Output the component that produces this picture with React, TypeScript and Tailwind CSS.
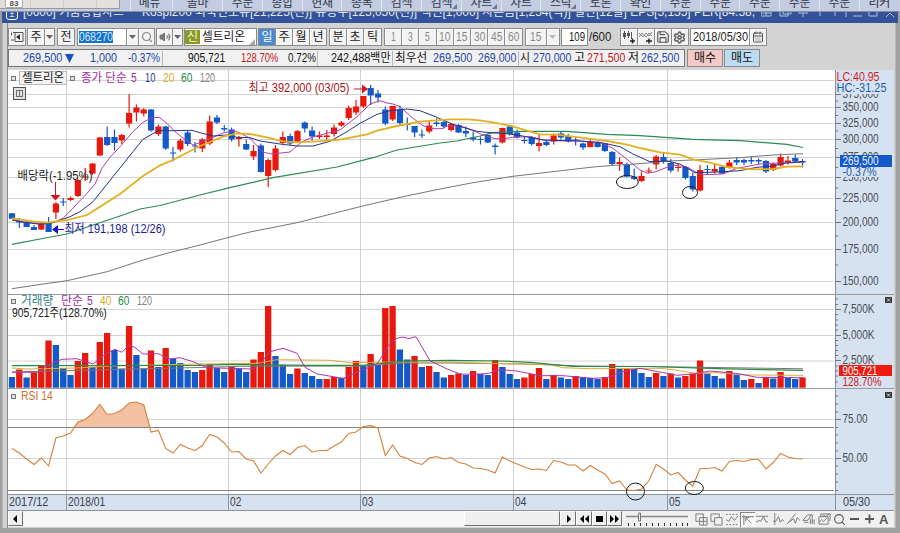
import React, { useLayoutEffect, useRef } from "react";
import { Search, Settings, Save, CalendarDays, Volume2 } from "lucide-react";

const FONT = "font-['Liberation_Sans','Noto_Sans_CJK_KR',sans-serif]";
const RED = "#e8190c";
const BLUE = "#1459c8";

/* Text condensed or widened horizontally so that it fills the width of its box. */
function Fit({ children, className = "" }: { children: string; className?: string }) {
  const box = useRef<HTMLSpanElement>(null);
  const inner = useRef<HTMLSpanElement>(null);
  useLayoutEffect(() => {
    if (box.current && inner.current && inner.current.offsetWidth > 0) {
      inner.current.style.transform = `scaleX(${box.current.clientWidth / inner.current.offsetWidth})`;
    }
  }, []);
  return (
    <span ref={box} className={"block shrink-0 whitespace-pre " + className}>
      <span ref={inner} className="inline-block origin-left">{children}</span>
    </span>
  );
}

const px = (i: number) => 12 + i * 7.32;

/* [up, body top, body bottom, high, low] */
const candles: number[][] = [
  [0,213.3,218.7,213,219],[0,221,222.5,218,228],[0,222,227,221,227],[0,227,230,225,230],[1,223.5,229.5,223,230],
  [0,222.5,232,217,232],[1,203.5,212.5,202,219],[0,201.5,202.5,198,206],[1,198,200,196.5,201],[1,180,196,179,197],
  [1,176.5,177.5,168,181],[1,163.5,173.5,163,175],[1,137.5,155.5,137,156],[0,137,145,126.5,146],[0,137,143,129.5,150.5],
  [1,135,140.5,134,144],[1,113,123.5,94,127.5],[1,107.5,112.5,104.5,121.5],[1,109.5,113.5,108,116.5],[0,109.5,130.5,109,131.5],
  [1,126.5,134,124.5,136],[0,126.5,148.5,126,150],[0,152.5,153.5,147,161.5],[1,140.5,149.5,138.5,151.5],[0,132.5,144,131,146],
  [0,145.5,146.5,142,152.5],[1,139.5,148.5,138,152],[1,121.5,143.5,115.5,145],[0,117.5,122.5,115,124],[0,128,129.5,125,131.5],
  [0,129.5,139.5,127.5,141.5],[1,137.5,139,136,146.5],[0,144,149.5,139.5,150],[1,151,156.5,145,160],[0,145.5,172,143.5,172.5],
  [1,160,176,158.5,187],[1,148.5,170,145,171.5],[1,137,143,131.5,144.5],[0,136,143.5,133.5,145],[1,131,141.5,130,142.5],
  [0,122.5,128.5,121.5,132.5],[0,130.5,136.5,126.5,140.5],[1,135.5,137,131.5,139],[1,135.5,137,130,140.5],[1,127.5,134,124.5,136.5],
  [1,122.5,125.5,121,126.5],[1,108,118,105.5,120],[1,106.5,112.5,100,115],[1,96,106.5,96,108],[0,88,95.5,85,105],
  [0,93.5,97.5,90,102.5],[0,109.5,123.5,106.5,125],[1,106,119.5,106,121],[0,109.5,123,105.5,125],[0,124,125,117.5,130.5],
  [0,126,132.5,126,137],[0,134.5,135.5,129.5,138],[1,125.5,131.5,121,133.5],[0,122.5,124,118.5,126.5],[0,122,126.5,120,128.5],
  [1,124,130,123,131.5],[0,125,132.5,124,133],[0,131,133.5,126.5,137],[0,137.5,139.5,131.5,141.5],[0,139,140,136.5,144.5],
  [0,135,142.5,134,143],[0,145.5,147,143.5,154.5],[1,128,142.5,127.5,143.5],[0,126.5,134,125,135.5],[0,132.5,137.5,129.5,138.5],
  [0,140,141,137,143.5],[0,137,144,136,145.5],[1,143,146,135,151.5],[0,142,145,140,146],[1,135.5,141.5,133.5,144.5],
  [0,133.5,137.5,131.5,139.5],[0,136,141.5,134,142.5],[0,139.5,140.5,137.5,145.5],[0,143.5,147.5,142.5,150],[1,142,147,138,147.5],
  [0,143,147,141.5,147.5],[0,143.5,151,143,152],[0,152,164,151,165],[1,162,164,157.5,171],[0,164.5,176.5,162.5,177.5],
  [0,176.5,179,168.5,180],[1,176,181,171.5,182],[1,170.5,171.5,167.5,173.5],[1,156.5,164.5,155,169.5],[0,157,161,152,163.5],
  [0,163,170.5,159,172.5],[1,167,168,164,171.5],[0,167,178,166,179.5],[0,176,189.5,172.5,191.5],[1,170,190.5,165,191.5],
  [0,169,170,165,174],[1,169,171.5,163.5,173.5],[0,167,173.5,166,174],[1,162.5,168,160,168.5],[0,160,162.5,157.5,165],
  [0,160,162.5,158.5,165],[0,160,161.5,157,164],[0,160,161.5,158.5,164],[0,161,171.5,160,173],[1,164,170,162.5,171],
  [1,157,165.5,153.5,166.5],[1,160.5,162.5,156,164.5],[0,158,161.5,154.5,162.5],[0,161,162.5,159,167.5],
];

/* Top of each volume bar, and whether it is an up bar. */
const volTop = [377,369.5,377.5,372.5,366,340.5,345,368,375,361,353,367,342,333,350,368.5,326,355,368.5,350.5,367,348,358.5,363,370,372,370,364.5,368,372,367,368.5,372,359.5,352,306,356,365,374,368.5,373,376,379,379,377,378,367,361,365,354,365,308,306,349.5,359.5,356,367,366,372,377.5,375,373.5,375,371,373.5,375,360,367,374,379,377.5,374,368,379,375,377.5,379,376,377,378,379,377,364,368,368,368.5,373,377,373,376,373.5,377.5,376,373.5,360.5,373.5,376,378.5,371,374.5,380,379,383,377,378.5,372,378,379,377.5];
const volUp =
  "0101110001" + "1011001001" + "0100001100" + "1001110001" + "0001101101" + "0110010100" +
  "1101001000" + "1110100100" + "0110100010" + "1011100010" + "010101001";

const rsi = [448.5,453,459,464.5,458,466,438,436,433,422,419.5,413.5,404.5,414.5,413.5,410,403,402,405,432,430.5,448.5,453,444.5,448,450.5,445.5,434.5,437,443,452,451.5,459,461,473,464,456,450.5,454.5,447.5,445.5,452,450.5,450.5,446,442,433.5,432,426.5,425.5,428,455.5,445,456,458.5,462.5,464.5,458,456.5,459,457.5,462.5,464,468,468.5,470,473,457,461,464,467,469.5,469,470.5,460.5,462,465,465,471,465.5,470,474,483.5,481,490,490.5,489,481,464.5,469,475,472.5,480,486,468.5,468.5,467.5,471,461.5,460.5,461.5,459.5,459.5,469,462.5,453.5,457,458.5,459];
const rsiPoints = rsi.map((y, i) => `${px(i).toFixed(1)},${y}`).join(" ");

const ma5 = "12,218.7 20,221.7 33,223 43,224 55,221.7 63,218.3 75,206 87,193.3 95,184 102,168.3 110,157.3 120,146.7 133,131.7 143,122.3 151,118 159,117.3 167,123.3 175,131.7 182,137.3 193,145 203,141.7 213,137.3 223,133 234,130.7 240,133 250,138.3 263,152.3 272,154 290,152 302,141.7 313,137 320,135 340,130 357,116.7 370,104 380,100.7 387,103 393,104 400,106.7 413,118.3 423,125.7 433,128.7 442,128.7 447,126 460,126 470,129.3 483,135 495,138.7 503,139 512,137.3 530,136.7 547,140.7 580,141 600,142.3 613,148.3 627,159.3 640,170 647,173 655,172 660,170 673,165 687,167 697,172.7 703,174.7 723,174 737,168.3 760,164 773,163.3 803,162.3";
const ma10 = "12,220 23,222 40,224.3 53,222.7 70,216.7 80,211.7 93,201.7 113,176.7 133,151.7 143,139.3 158,130.7 173,130.7 192,130.3 200,132.7 213,136 227,135 237,137.3 250,137.7 260,141 280,144 297,146 313,146 330,141.3 347,131.7 360,123.3 377,114.3 390,110.7 407,109 420,110.7 433,115.7 453,124.3 463,127.3 477,131.3 490,132.7 503,133.3 517,135 530,137.3 543,140 580,141 603,143 620,146.7 633,154 650,161.7 667,161 680,164 695,172.7 717,172 740,170.7 757,167.3 773,166 783,163.3 803,161.5";
const ma20 = "12,218.3 33,221.3 47,222.7 67,220 87,215 100,206.7 120,194 143,176 160,165.3 173,160 200,146 223,136.7 237,133.3 250,134 267,137.3 283,141.3 297,142.3 317,141.3 340,139.7 367,134.3 377,130.7 397,126 420,121.7 450,119.3 467,119.3 480,120.3 493,122.3 510,125.7 527,130.7 540,134.3 557,134.7 587,138.3 607,141 627,144.7 640,148 660,152.3 680,154.7 693,159.3 710,162.7 727,167 740,168.3 753,169.3 773,169 787,166.7 803,166.3";
const ma60 = "12,244.3 40,239 67,234 93,225 120,216 140,209 160,205.5 200,195 230,187.7 273,177.7 337,167 373,157.7 397,150 440,143 457,141 480,136 493,132.7 520,131.3 567,131.3 607,134.3 640,135.7 693,139.3 740,140.7 787,144.3 803,147.5";
const ma120 = "12,288.7 43,284 67,280.7 107,271.7 143,260 167,253.3 200,245 230,237 250,232 297,222.7 360,206.7 403,196.7 440,189 473,182.7 513,176.3 550,172 593,167 610,165.7 640,163.7 669,161 703,159.5 740,157.7 773,155 803,153.7";
const vma5 = "12,372.3 37,372.3 50,364 62,359.3 77,358.7 93,364 107,353 115,349.3 122,352.3 129,345 135,347.5 143,354 158,353.7 170,359 180,357.7 193,361.7 207,367.7 253,369 260,364 270,351.7 283,348.3 297,353.3 305,367.3 317,374 343,378.3 360,371 377,364 390,343.3 397,338.3 402,337 409,338.5 416,336.7 430,360.7 447,369 460,374 480,374.5 490,373 500,369.7 517,371 540,375.7 563,375.7 593,378.3 607,377.7 620,372.3 640,368.3 660,372 677,375.3 693,374 710,371 737,373.5 757,377.3 803,377.7";
const vma40 = "12,368 27,369 77,368 110,366 197,364 257,363.3 277,359.7 330,360.3 350,362.7 397,362 450,362.3 520,364 550,364.7 563,367.7 590,368.7 660,368.3 675,370 693,373 717,372.7 750,375 803,375.3";
const vma60 = "12,365.7 200,365.3 230,364.3 310,365.3 363,365.3 403,361 450,360.3 500,361 530,362.3 573,366.3 650,366.5 717,368.7 803,370.3";
const vma120 = "12,372 67,370.7 133,369 200,367.5 240,366.3 363,366 403,363 450,363 523,364 583,366 660,366.7 803,368.8";

const months = [66.5, 228.5, 360.5, 513.5, 667.5];

function Plot({ y, h, grid, children }: { y: number; h: number; grid: number[]; children: React.ReactNode }) {
  return (
    <svg width="827" height={h} viewBox={`8 ${y} 827 ${h}`} className="block shrink-0 overflow-visible">
      {grid.map((g) => <line key={g} x1="8" x2="834" y1={g} y2={g} stroke="#d4d4d4" />)}
      {months.map((m) => <line key={m} x1={m} x2={m} y1={y} y2={y + h} stroke="#d0d0d0" />)}
      {children}
    </svg>
  );
}

function Axis({ y, h, labels, minor, children }: { y: number; h: number; labels: [number, string, number][]; minor: number[]; children?: React.ReactNode }) {
  return (
    <svg width="59" height={h} viewBox={`835 ${y} 59 ${h}`} className="block shrink-0 overflow-hidden bg-[#d7e2f0]" fontSize="12">
      <line x1="835.5" x2="835.5" y1={y} y2={y + h} stroke="#8a8f98" />
      {minor.map((m) => <line key={m} x1="835" x2="838" y1={m} y2={m} stroke="#777" />)}
      {labels.map(([ly, t, w]) => (
        <g key={t}>
          <line x1="835" x2="841" y1={ly} y2={ly} stroke="#777" />
          <text x="842.5" y={ly + 3.5} fill="#484c54" textLength={w} lengthAdjust="spacingAndGlyphs">{t}</text>
        </g>
      ))}
      {children}
    </svg>
  );
}

function CloseMark({ y }: { y: number }) {
  return (
    <g>
      <rect x="885" y={y} width="7" height="6" fill="#3a3a3a" />
      <path d={`M887 ${y + 1.5}l3 3m0 -3l-3 3`} stroke="#fff" strokeWidth=".8" />
    </g>
  );
}

const Dot = ({ className = "" }: { className?: string }) => (
  <i className={"block size-[5px] shrink-0 border border-[#777] bg-[#ddd] " + className} />
);

const Down = ({ light = false }: { light?: boolean }) => (
  <svg width="7" height="4" viewBox="0 0 7 4"><path d="M0 0h7L3.5 4z" fill={light ? "#bbb" : "#666"} /></svg>
);

function Btn({ className = "", children }: { className?: string; children?: React.ReactNode }) {
  return (
    <div className={"flex h-[18px] shrink-0 items-center justify-center border border-[#8c8c8c] bg-[#f3f3f3] shadow-[inset_1px_1px_0_#fff] " + className}>
      {children}
    </div>
  );
}

const tabs: [string, boolean][] = [["메뉴", false], ["올마", false], ["주문", false], ["종합", false], ["현재", false], ["종목", false], ["검색", false], ["검색", true], ["차트", true], ["차트", false], ["스탁", true], ["토론", false], ["확인", false], ["주문", false], ["주문", false], ["주문", false], ["주문", false], ["주문", false], ["리커", false]];

function TopStrip() {
  return (
    <div className="flex h-[12px] overflow-hidden border-b border-[#8b8f98] bg-[#c3cce0]">
      <div className="flex h-[9px] w-[120px] shrink-0 border-r border-b border-[#999] bg-[#e2e0df] pl-[5px]">
        <div className="h-[8px] w-[18px] rounded-b-[2px] border border-t-0 border-[#aaa] bg-white text-center text-[8px] leading-[7px] font-bold text-[#555]">83</div>
        <div className="ml-[7px] h-full w-[34px] border-x border-[#ccc]" />
        <div className="h-full w-[33px] border-r border-[#ccc]" />
      </div>
      <div className="ml-[10px] flex">
        {tabs.map(([t, c], i) => (
          <div key={i} className={"relative h-[11px] shrink-0 border-l border-[#dfe6f2] " + (i === 0 ? "w-[42px]" : i === 1 ? "w-[50px]" : "w-[39.8px]")}>
            <div className={"-mt-[5px] text-center text-[12px] leading-[16px] tracking-[-0.3px] text-[#303848] " + (i === 0 ? "pr-[4px]" : "")}>{t}</div>
            {c && <svg className="absolute right-[4px] bottom-[2px]" width="5" height="5"><path d="M5 0v5H0z" fill="#6e7786" /></svg>}
          </div>
        ))}
      </div>
    </div>
  );
}

function TitleBar() {
  return (
    <div className="mx-[2px] flex h-[11px] items-start overflow-hidden bg-[#33529a] pl-[4px] text-[12px] leading-[16px] text-[#e4eaf6]">
      <div className="-mt-[4px] flex h-[12px] w-[12px] items-center justify-center rounded-[3px] border border-white text-[9px] leading-none">±</div>
      <Fit className="-mt-[8px] ml-[5px] w-[101px]">[0600] 키움종합차트</Fit>
      <Fit className="-mt-[8px] ml-[18px] w-[613px]">Kospi200 외국인보유[21,225(천)] 유동주[125,050(천)] 액면[1,000] 자본금[1,254(억)] 결산[12월] EPS[5,155] PER[84.58,</Fit>
      <svg className="ml-[6px] shrink-0" width="134" height="6" fill="none" stroke="#aebfe2">
        <path d="M0 0v4h10V0M5 0v4M0 1h10M19 0v4h8V0M22 0v2h8V0M37 1h10M42 1v4M59 0v4M74 0v4M85 0v5M92 4h9M108 0v4h8V0M125 5l4 -4l4 4" />
      </svg>
    </div>
  );
}

function Toolbar() {
  return (
    <div className="flex h-[18px] text-[12px] leading-[16px] text-[#222]">
      <Btn className="w-[18px]">
        <svg width="13" height="11" viewBox="0 0 13 11" fill="none" stroke="#555"><path d="M2 .5H12v9H4M.5 .5v3M4 .5v9" /><path d="M5 5l4 -3v6z" fill="#333" stroke="none" /><path d="M0 8h3" /></svg>
      </Btn>
      <Btn className="ml-[1px] w-[18px]">주</Btn>
      <Btn className="-ml-px w-[11px]"><Down /></Btn>
      <Btn className="ml-[2px] w-[18px]">전</Btn>
      <div className="ml-[2px] flex h-[18px] w-[50px] items-center border border-[#8c8c8c] bg-white pl-px">
        <Fit className="h-[12px] w-[34px] bg-[#1673cc] leading-[12px] text-[#d8ecff]">068270</Fit>
      </div>
      <Btn className="-ml-px w-[13px]"><Down /></Btn>
      <Btn className="-ml-px w-[17px]"><Search size={12} stroke="#888" strokeWidth={2.4} /></Btn>
      <Btn className="ml-[1px] w-[17px]">
        <Volume2 size={12} stroke="#777" fill="#777" />
      </Btn>
      <Btn className="-ml-px w-[11px]"><Down /></Btn>
      <div className="ml-[1px] flex h-[18px] w-[73px] items-center border border-[#8c8c8c] bg-white">
        <span className="h-[14px] w-[15px] shrink-0 bg-[#8a9a22] text-center leading-[14px] text-[#f4f6d8]">신</span>
        <Fit className="ml-[2px] w-[43px]">셀트리온</Fit>
        <svg className="ml-[4px] self-end" width="6" height="6"><path d="M6 0v6H0z" fill="#aaa" /></svg>
      </div>
      <Btn className="ml-[1px] w-[18px] !bg-[#4a8ad4] text-white !shadow-none">일</Btn>
      {["주", "월", "년"].map((t) => <Btn key={t} className="-ml-px w-[18px]">{t}</Btn>)}
      <Btn className="ml-[2px] w-[18px]">분</Btn>
      <Btn className="-ml-px w-[18px]">초</Btn>
      <Btn className="-ml-px w-[19px]">틱</Btn>
      <div className="ml-[2px] flex text-[#888]">
        {["1", "3", "5", "10", "15", "30", "45", "60"].map((t) => (
          <Btn key={t} className="-mr-px w-[18.2px]"><Fit className={t.length > 1 ? "w-[11px]" : "w-[5px]"}>{t}</Fit></Btn>
        ))}
      </div>
      <Btn className="ml-[3px] w-[22px] text-[#888]"><Fit className="w-[11px]">15</Fit></Btn>
      <Btn className="-ml-px w-[14px]"><Down light /></Btn>
      <div className="ml-[1px] flex h-[18px] w-[27px] items-center justify-end border border-[#8c8c8c] bg-white pr-[2px]"><Fit className="w-[16px]">109</Fit></div>
      <Fit className="ml-[1px] w-[22px] leading-[18px]">/600</Fit>
      <Btn className="ml-[9px] w-[18px]">
        <svg width="14" height="13" viewBox="0 0 14 13" stroke="#555"><path d="M2.5 0v8M6.5 0v7M9.5 1v7" /><path d="M1 2h3v4H1zM5 2h3v3H5z" fill="#555" stroke="none" /><path d="M8 10h5M10.500 7.500v5" stroke="#222" strokeWidth="1.500" /></svg>
      </Btn>
      <Btn className="-ml-px w-[18px]">
        <svg width="14" height="13" viewBox="0 0 14 13" fill="none" stroke="#888"><path d="M0 6l3 -4l4 4l3 -4l3 3M0 2l4 4l3 -4l3 3l3 -4" /><path d="M7 10h6M10 7.500v5" stroke="#222" strokeWidth="1.500" /></svg>
      </Btn>
      <Btn className="-ml-px w-[18px]"><Save size={14} stroke="#555" /></Btn>
      <Btn className="-ml-px w-[18px]"><Settings size={13} stroke="#666" strokeWidth={3} /></Btn>
      <div className="ml-[1px] flex h-[18px] w-[60px] items-center border border-[#8c8c8c] bg-white pl-[2px]"><Fit className="w-[55px]">2018/05/30</Fit></div>
      <Btn className="-ml-px w-[18px]"><CalendarDays size={12} stroke="#555" /></Btn>
    </div>
  );
}

function InfoRow() {
  const sep = "h-[15px] w-px shrink-0 bg-[#bbb]";
  return (
    <div className="mt-[3px] flex h-[18px] text-[12px] text-[#111]">
      <div className="flex h-[18px] w-[677px] items-center border border-[#777] bg-[#f1f1f1] leading-[16px]">
        <Fit className="ml-[14px] w-[39px] text-[#1c46a8]">269,500</Fit>
        <svg className="ml-[3px] shrink-0" width="9" height="9"><path d="M0 0h9L4.500 9z" fill="#1c4fc0" /></svg>
        <Fit className="ml-[16px] w-[27px] text-[#1c46a8]">1,000</Fit>
        <Fit className="ml-[11px] w-[32px] text-[#1c46a8]">-0.37%</Fit>
        <div className={sep + " ml-[2px]"} />
        <Fit className="ml-[25px] w-[37px]">905,721</Fit>
        <Fit className="ml-[16px] w-[37px] text-[#c4161c]">128.70%</Fit>
        <Fit className="ml-[10px] w-[28px]">0.72%</Fit>
        <div className={sep + " ml-[1px]"} />
        <Fit className="ml-[13px] w-[59px]">242,488백만</Fit>
        <div className={sep + " ml-[2px]"} />
        <Fit className="ml-[2px] w-[32px]">최우선</Fit>
        <Fit className="ml-[6px] w-[39px] text-[#1c46a8]">269,500</Fit>
        <Fit className="ml-[6px] w-[38px] text-[#1c46a8]">269,000</Fit>
        <div className={sep + " ml-[2px]"} />
        <Fit className="ml-[1px] w-[10px]">시</Fit>
        <Fit className="ml-[3px] w-[38px] text-[#1c46a8]">270,000</Fit>
        <Fit className="ml-[3px] w-[11px]">고</Fit>
        <Fit className="ml-[2px] w-[38px] text-[#c4161c]">271,500</Fit>
        <Fit className="ml-[3px] w-[11px]">저</Fit>
        <Fit className="ml-[2px] w-[38px] text-[#1c46a8]">262,500</Fit>
      </div>
      <Btn className="ml-[2px] w-[36px] !bg-[#f4c9c6] !shadow-none">매수</Btn>
      <Btn className="ml-[1px] w-[36px] !bg-[#bcdcf3] !shadow-none">매도</Btn>
    </div>
  );
}

const priceLabels: [number, string, number][] = [[94.5, "375,000", 36], [107.5, "350,000", 36], [123.5, "325,000", 36], [139.5, "300,000", 36], [157.5, "275,000", 36], [177.5, "250,000", 36], [198.5, "225,000", 36], [222.5, "200,000", 36], [249.5, "175,000", 36], [281.5, "150,000", 36]];

function PricePane() {
  return (
    <div className="relative flex h-[224px]">
      <Plot y={70} h={224} grid={[80.5, 94.5, 107.5, 123.5, 139.5, 157.5, 177.5, 198.5, 222.5, 249.5, 281.5]}>
        {candles.map(([up, t, b, hi, lo], i) => (
          <g key={i} fill={up ? RED : BLUE}>
            <rect x={px(i) - 0.6} y={hi} width="1.2" height={lo - hi} />
            <rect x={px(i) - 3.1} y={t} width="6.200" height={b - t} />
          </g>
        ))}
        <g fill="none" strokeWidth="1">
          <polyline points={ma120} stroke="#77767a" />
          <polyline points={ma60} stroke="#2c8a55" strokeWidth="1.200" />
          <polyline points={ma5} stroke="#b23fae" />
          <polyline points={ma10} stroke="#25348a" />
          <polyline points={ma20} stroke="#e3b020" strokeWidth="1.800" />
        </g>
        <g fontSize="12">
          <text x="17.500" y="179.500" fill="#222" textLength="75" lengthAdjust="spacingAndGlyphs">배당락(-1.95%)</text>
          <path d="M55.500 182V196" stroke="#c4161c" />
          <path d="M50.500 195h10L55.500 200.500z" fill="#d8141c" />
          <path d="M52 229.500l6 -4.500v9z" fill="#1414c0" /><path d="M57 229.500h7" stroke="#1414c0" />
          <text x="64.500" y="233" fill="#1c1c96" textLength="101" lengthAdjust="spacingAndGlyphs">최저 191,198 (12/26)</text>
          <text x="248.500" y="92" fill="#a81418" textLength="101" lengthAdjust="spacingAndGlyphs">최고 392,000 (03/05)</text>
          <path d="M354 89h9" stroke="#c4161c" /><path d="M368 89l-6 -4.500v9z" fill="#e0141c" />
        </g>
        <g fill="none" stroke="#1a1a1a">
          <ellipse cx="627.300" cy="182" rx="11" ry="6.500" />
          <ellipse cx="690" cy="192.500" rx="7.500" ry="6" />
        </g>
      </Plot>
      <Axis y={70} h={224} labels={priceLabels} minor={[101, 115.5, 131, 148.5, 167.5, 188, 210.5, 236, 265]}>
        <rect x="836.500" y="71" width="56" height="23" fill="#d7e2f0" />
        <text x="836.500" y="81" fill="#d01c1c" textLength="43" lengthAdjust="spacingAndGlyphs">LC:40.95</text>
        <text x="836.500" y="92" fill="#1c5cac" textLength="50" lengthAdjust="spacingAndGlyphs">HC:-31.25</text>
        <rect x="841" y="167" width="51" height="10" fill="#d7e2f0" />
        <rect x="840" y="155" width="52" height="12" fill="#1459c8" />
        <text x="842.500" y="165" fill="#eaf2ff" textLength="36" lengthAdjust="spacingAndGlyphs">269,500</text>
        <text x="842.500" y="176" fill="#1c5cac" textLength="34" lengthAdjust="spacingAndGlyphs">-0.37%</text>
      </Axis>
      <div className="absolute top-[1px] left-[3px] flex h-[14px] items-center text-[12px] leading-[14px]">
        <Dot />
        <div className="ml-[3px] flex h-[14px] items-center border border-[#bbb] bg-[#f4f4f4] px-[2px] leading-[12px]"><Fit className="w-[42px] text-[#222]">셀트리온</Fit></div>
        <Dot className="ml-[3px]" />
        <Fit className="ml-[6px] w-[46px] text-[#a828a4]">종가 단순</Fit>
        <Fit className="ml-[4px] w-[6px] text-[#a828a4]">5</Fit>
        <Fit className="ml-[8px] w-[10px] text-[#2438a0]">10</Fit>
        <Fit className="ml-[8px] w-[11px] text-[#d8aa20]">20</Fit>
        <Fit className="ml-[7px] w-[11px] text-[#1c8a44]">60</Fit>
        <Fit className="ml-[8px] w-[15px] text-[#808080]">120</Fit>
      </div>
      <svg className="absolute top-[17px] left-[5px]" width="13" height="14" fill="none" stroke="#555">
        <rect x=".5" y=".5" width="12" height="12" fill="#e2e2e2" /><path d="M3 3.500h7M3.500 3.500v6M6.500 3.500v6M9.500 3.500v6M3 9.500h7" strokeWidth=".8" />
      </svg>
    </div>
  );
}

function VolumePane() {
  return (
    <div className="relative flex h-[94px] border-t border-[#9a9a9a]">
      <Plot y={295} h={93} grid={[309.5, 335.5, 361]}>
        {volTop.map((t, i) => (
          <rect key={i} x={px(i) - 3.2} y={t} width="6.300" height={387.7 - t} fill={volUp[i] === "1" ? RED : BLUE} />
        ))}
        <g fill="none" strokeWidth="1">
          <polyline points={vma120} stroke="#77767a" />
          <polyline points={vma40} stroke="#dcae34" />
          <polyline points={vma60} stroke="#2c8a45" strokeWidth="1.200" />
          <polyline points={vma5} stroke="#ae35ac" />
        </g>
      </Plot>
      <Axis y={295} h={93} labels={[[309.5, "7,500K", 32], [335.5, "5,000K", 32], [360.5, "2,500K", 32]]} minor={[299, 304.5, 314.5, 320, 325, 330, 340.5, 345.5, 350.5, 355.5, 366, 371, 376, 382]}>
        <CloseMark y={297} />
        <rect x="841" y="376" width="51" height="12" fill="#d7e2f0" />
        <rect x="839" y="365" width="53" height="11" fill="#ec1c10" />
        <text x="842.500" y="374.500" fill="#fff" textLength="35" lengthAdjust="spacingAndGlyphs">905,721</text>
        <text x="842.500" y="386" fill="#d01c1c" textLength="39" lengthAdjust="spacingAndGlyphs">128.70%</text>
      </Axis>
      <div className="absolute top-0 left-[3px] flex h-[13px] items-center text-[12px] leading-[13px]">
        <Dot />
        <Fit className="ml-[5px] w-[32px] text-[#2c8484]">거래량</Fit>
        <Fit className="ml-[8px] w-[22px] text-[#a828a4]">단순</Fit>
        <Fit className="ml-[4px] w-[6px] text-[#a828a4]">5</Fit>
        <Fit className="ml-[7px] w-[11px] text-[#d8aa20]">40</Fit>
        <Fit className="ml-[7px] w-[11px] text-[#1c8a44]">60</Fit>
        <Fit className="ml-[8px] w-[15px] text-[#808080]">120</Fit>
      </div>
      <Fit className="absolute top-[12px] left-[4px] w-[95px] text-[12px] leading-[13px] text-[#222]">905,721주(128.70%)</Fit>
    </div>
  );
}

function RsiPane() {
  return (
    <div className="relative flex h-[106px] border-t border-[#9a9a9a]">
      <Plot y={389} h={105} grid={[419.5, 458.5]}>
        <clipPath id="overbought"><rect x="8" y="390" width="827" height="37.500" /></clipPath>
        <polygon clipPath="url(#overbought)" points={`12,460 ${rsiPoints} 803,470 803,520 12,520`} fill="#f4c2a2" />
        <line x1="8" x2="834" y1="427.500" y2="427.500" stroke="#848484" />
        <line x1="8" x2="834" y1="490.500" y2="490.500" stroke="#848484" />
        <polyline points={rsiPoints} fill="none" stroke="#d4823c" strokeWidth="1.100" />
        <g fill="none" stroke="#1a1a1a">
          <ellipse cx="635.500" cy="491.500" rx="9" ry="8.500" />
          <ellipse cx="694.300" cy="488" rx="9" ry="6.500" />
        </g>
      </Plot>
      <Axis y={389} h={105} labels={[[419.5, "75.00", 25], [458.5, "50.00", 25]]} minor={[396, 404, 412, 427.5, 435, 443, 451, 466, 474, 482, 490.5]}>
        <CloseMark y={392} />
      </Axis>
      <div className="absolute top-[1px] left-[3px] flex h-[13px] items-center text-[12px] leading-[13px]">
        <Dot />
        <Fit className="ml-[5px] w-[32px] text-[#d0702c]">RSI 14</Fit>
      </div>
    </div>
  );
}

function DateRow() {
  const cell = "h-full shrink-0 border-l border-[#8c939e] pl-[1px]";
  return (
    <div className="flex h-[17px] border-y border-[#8c939e] bg-[#d7e2f0] text-[12px] leading-[15px] text-[#3c4048]">
      <div className="w-[58px] shrink-0 pl-[1px]"><Fit className="w-[39px]">2017/12</Fit></div>
      <div className={cell + " w-[162px]"}><Fit className="w-[37px]">2018/01</Fit></div>
      <div className={cell + " w-[132px]"}><Fit className="w-[11px]">02</Fit></div>
      <div className={cell + " w-[153px]"}><Fit className="w-[11px]">03</Fit></div>
      <div className={cell + " w-[154px]"}><Fit className="w-[11px]">04</Fit></div>
      <div className={cell + " w-[168px]"}><Fit className="w-[11px]">05</Fit></div>
      <div className={cell + " w-[58px] !pl-[7px]"}><Fit className="w-[27px]">05/30</Fit></div>
    </div>
  );
}

const raised = "flex h-[15px] shrink-0 items-center justify-center border border-t-white border-l-white border-r-[#707070] border-b-[#707070] bg-[#efefef] ";

function BottomBar() {
  const nav: [string, string][] = [["M4 1l4 4l-4 4z", "w-[16px]"], ["M5 1v8L1 5zM10 1v8L6 5z", "w-[16px]"], ["M2 2h7v6H2z", "w-[15px]"], ["M1 1v8l4 -4zM6 1v8l4 -4z", "w-[15px]"]];
  const icons = [
    "M5 9H1V1h8v4M5 5h8v8H5zM9 5v8M5 9h8",
    "M5 9H1V1h9v4M5 5h8v8H5z",
    "M0 7l3 2l3 -5l3 4l4 -5",
    "M2 2v11M0 4h13M4 5l6 6M4 5h4M4 5v4",
    "M0 3.500h13M0 10l3 -2l2 1l3 -5l3 6l2 -1",
    "M3 0v13M1 9h3l3 -5l2 6l2 -3l2 2",
    "M0 12L9 1M3 10l4 -4l2 5l2 -6l3 3",
    "M1 8l5 -6h5v7M1 8h5l4 -6M2 10h5M9 6v6M11 8v4M13 7v5",
    "M3 4V1h10v7h-1M1 4h10v8H1zM1 10l3 -3l2 2l4 -4M4 4l2 -2l2 2l4 -3",
  ];
  return (
    <div className="flex h-[16px] items-start bg-[#f0f0f0]">
      <div className={raised + "w-[15px]"}><svg width="5" height="8"><path d="M4 0v8L0 4z" fill="#000" /></svg></div>
      <div className="h-[15px] w-[441px] shrink-0 bg-[#f7f7f7]" />
      <div className={raised + "w-[96px]"} />
      {nav.map(([d, w]) => (
        <div key={d} className={raised + w}><svg width="11" height="10"><path d={d} fill="#000" /></svg></div>
      ))}
      <svg className="ml-[4px] shrink-0" width="64" height="16" stroke="#777" fill="none">
        <path d="M0 5.500h62" stroke="#888" strokeWidth="1.500" /><path d="M12.500 2v8h2v-8z" fill="#eee" />
        <path d="M2.500 12v3M8.500 12v3M14.500 12v3M20.500 12v3M26.500 12v3M32.500 12v3M38.500 12v3M44.500 12v3M50.500 12v3M56.500 12v3M61.500 12v3" stroke="#333" />
      </svg>
      <div className="ml-[4px] flex h-[16px] items-center">
        {icons.map((d, i) => (
          <div key={i} className={"flex h-[15px] w-[15.3px] items-center justify-center " + (i === 3 ? "border-t border-l border-[#888] bg-[#f8f8f8]" : "")}>
            <svg width="13" height="13" viewBox="0 0 14 14" fill="none" stroke="#777">
              <path d={d} />
              {i === 2 && <path d="M0 1.500h13M0 12.500h13" strokeDasharray="2 1.500" />}
            </svg>
          </div>
        ))}
        <div className="flex w-[15.3px] justify-center"><Search size={13} stroke="#555" /></div>
        <svg width="31" height="14" stroke="#555" strokeWidth="1.800"><path d="M3 7h9M18 7h9M22.500 2.500v9" /></svg>
        <span className="ml-[1px] text-[13px] leading-[15px] font-bold text-[#555]">A</span>
      </div>
    </div>
  );
}

export default function App() {
  return (
    <div className={"h-[533px] w-[900px] overflow-hidden bg-[#a0a0a0] " + FONT}>
      <TopStrip />
      <TitleBar />
      <div className="mr-[4px] ml-[2px] flex h-[505px] border-r border-l border-[#b8b8b8] bg-[#d3d3d3] pl-[4px]">
        <div className="w-[887px] border-l border-[#888]">
          <div className="h-[47px] pt-[5px]">
            <Toolbar />
            <InfoRow />
          </div>
          <div className="h-[424px] w-[886px] border-r border-[#999] bg-white">
            <PricePane />
            <VolumePane />
            <RsiPane />
          </div>
          <div className="w-[886px]">
            <DateRow />
            <BottomBar />
          </div>
        </div>
      </div>
    </div>
  );
}
